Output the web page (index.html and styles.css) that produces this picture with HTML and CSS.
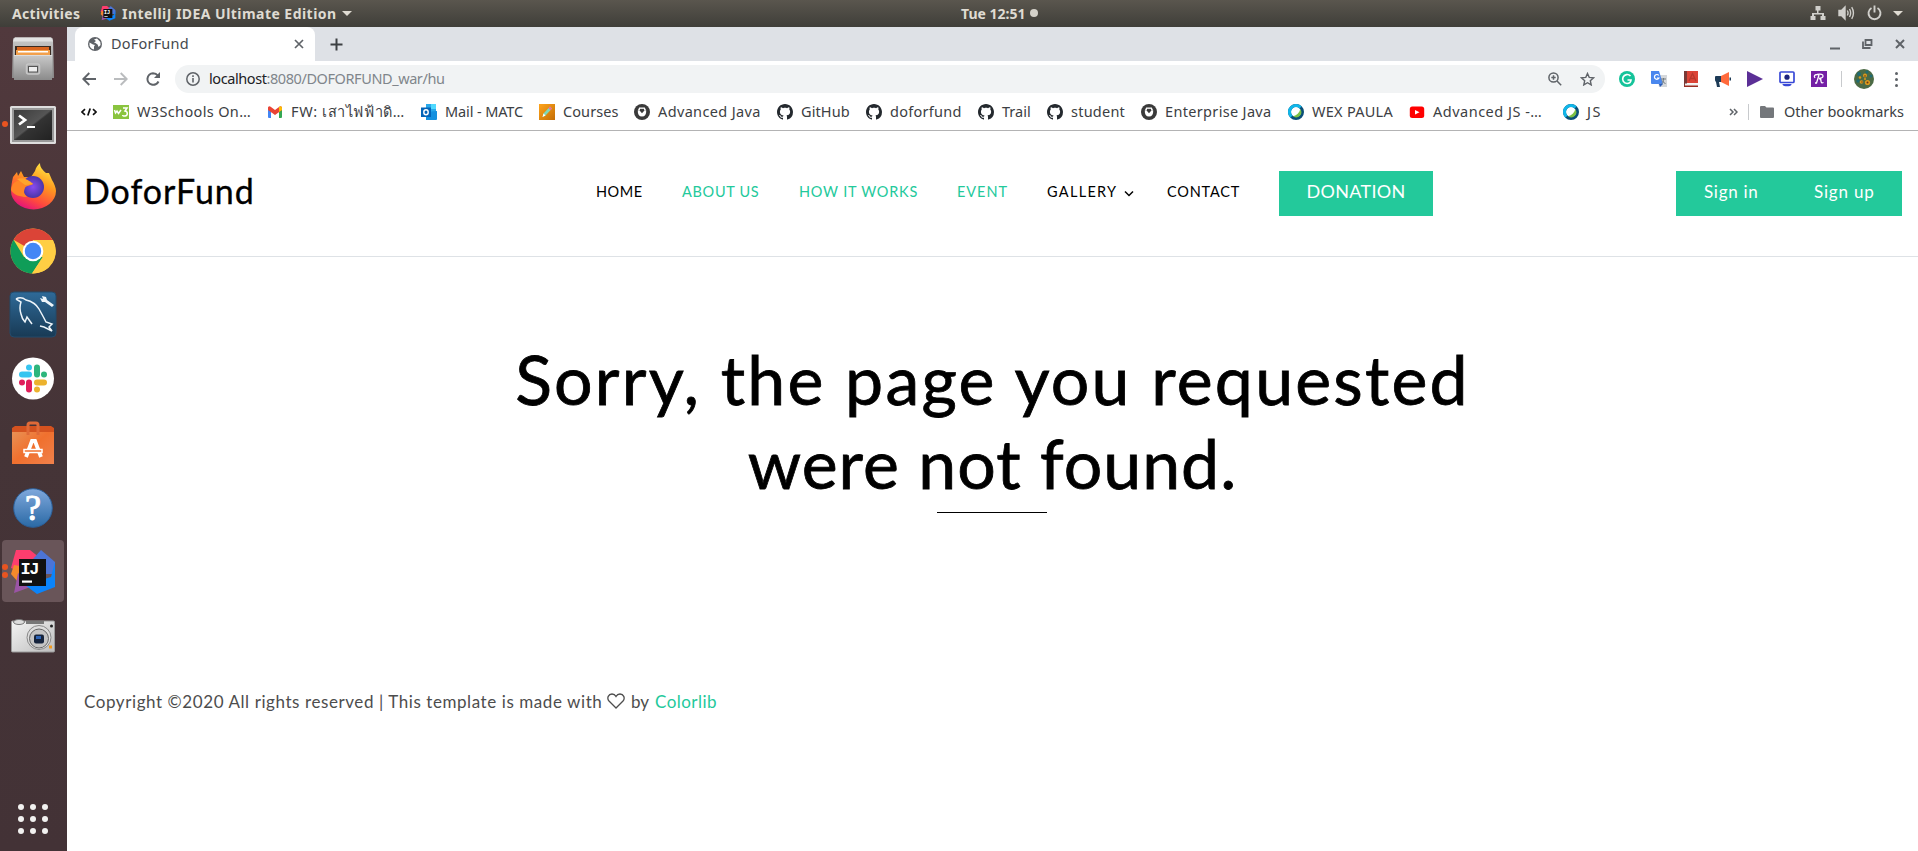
FILE: index.html
```html
<!DOCTYPE html>
<html lang="en">
<head>
<meta charset="utf-8">
<title>DoForFund</title>
<link rel="stylesheet" href="styles.css">
</head>
<body>
<svg class="defs" width="0" height="0" aria-hidden="true">
  <defs>
    <linearGradient id="grey" x1="0" y1="0" x2="0" y2="1"><stop offset="0" stop-color="#c9c9c9"/><stop offset="1" stop-color="#8b8b8b"/></linearGradient>
    <linearGradient id="term" x1="0" y1="0" x2="1" y2="1"><stop offset="0" stop-color="#3b3b3b"/><stop offset=".48" stop-color="#555"/><stop offset=".52" stop-color="#333"/><stop offset="1" stop-color="#222"/></linearGradient>
    <linearGradient id="fox" x1=".8" y1="0" x2=".3" y2="1"><stop offset="0" stop-color="#fff04a"/><stop offset=".4" stop-color="#ff9a1f"/><stop offset=".75" stop-color="#ff4a3d"/><stop offset="1" stop-color="#e3107e"/></linearGradient>
    <radialGradient id="globe"><stop offset="0" stop-color="#8a4bf0"/><stop offset="1" stop-color="#4a36a8"/></radialGradient>
    <linearGradient id="sea" x1="0" y1="0" x2="0" y2="1"><stop offset="0" stop-color="#2f6a98"/><stop offset="1" stop-color="#183a55"/></linearGradient>
    <linearGradient id="bag" x1="0" y1="0" x2="1" y2="1"><stop offset="0" stop-color="#e8965a"/><stop offset=".5" stop-color="#f0702e"/><stop offset="1" stop-color="#f0814c"/></linearGradient>
    <linearGradient id="help" x1="0" y1="0" x2="0" y2="1"><stop offset="0" stop-color="#7fa8dc"/><stop offset="1" stop-color="#2a69a5"/></linearGradient>
    <linearGradient id="cam" x1="0" y1="0" x2="1" y2="1"><stop offset="0" stop-color="#f4f4f4"/><stop offset="1" stop-color="#bdbdbd"/></linearGradient>
    <linearGradient id="pen" x1="0" y1="0" x2="1" y2="1"><stop offset="0" stop-color="#ffa41b"/><stop offset="1" stop-color="#c46e05"/></linearGradient>
    <symbol id="ij" viewBox="0 0 48 48">
      <path d="M7 3l14 0 10 8-4 20-25-10z" fill="#fe3d6e"/>
      <path d="M5 18l-3 9 7 8 8-4-6-12z" fill="#f58a2b"/>
      <path d="M9 26L5 46l22-8z" fill="#9a54a5"/>
      <path d="M24 12l8-9 14 12v12H24z" fill="#4c74d6"/>
      <path d="M46 15v25L28 47 16 38l26-8z" fill="#0b84fb"/>
      <path d="M10 12h27v27H10z" fill="#111"/>
      <text x="11.500" y="27" class="ij-text">IJ</text>
      <path d="M13 33.500h10v2.200H13z" fill="#fff"/>
    </symbol>
    <symbol id="github" viewBox="0 0 16 16"><path fill="#24292e" d="M8 0C3.580 0 0 3.580 0 8c0 3.540 2.290 6.530 5.470 7.590.4.070.55-.17.55-.38 0-.19-.01-.82-.01-1.490-2.010.37-2.530-.49-2.690-.94-.09-.23-.48-.94-.82-1.130-.28-.15-.68-.52-.01-.53.63-.01 1.080.58 1.230.82.72 1.210 1.870.87 2.330.66.070-.52.28-.87.51-1.070-1.780-.2-3.640-.89-3.640-3.950 0-.87.31-1.590.82-2.150-.08-.2-.36-1.020.080-2.120 0 0 .67-.21 2.200.82.64-.18 1.320-.27 2-.27s1.360.090 2 .27c1.530-1.040 2.200-.82 2.200-.82.44 1.100.16 1.920.080 2.120.51.56.82 1.270.82 2.150 0 3.070-1.870 3.750-3.650 3.950.29.25.54.73.54 1.480 0 1.070-.01 1.930-.01 2.200 0 .21.15.46.55.38A8.010 8.010 0 0016 8c0-4.420-3.580-8-8-8z"/></symbol>
    <symbol id="cup" viewBox="0 0 16 16"><circle cx="8" cy="8" r="8" fill="#3a3a3a"/><path d="M3.800 6.500h8.400q.3 6-4.200 6t-4.200-6z" fill="#fff"/><path d="M5.200 3.500h5.600l1.400 3H3.800z" fill="#fff"/><path d="M8 9.300L5.800 6.700q-.3-2 1.200-2.200L8 5.300l1-.8q1.500.2 1.200 2.200z" fill="#3a3a3a"/></symbol>
    <symbol id="webex" viewBox="0 0 16 16"><circle cx="8" cy="8" r="6.500" fill="none" stroke="#0a4f78" stroke-width="3"/><path d="M3.400 12.600A6.500 6.500 0 0112.600 3.400" fill="none" stroke="#10b7ea" stroke-width="3"/><path d="M12.300 5.300a5 5 0 01-7 7c3.500-.8 6-3.300 7-7z" fill="#7bc043"/></symbol>
  </defs>
</svg>

<header class="panel">
  <div class="panel-left">
    <span class="activities">Activities</span>
    <svg class="i16" viewBox="0 0 48 48"><use href="#ij"/></svg>
    <span class="appname">IntelliJ IDEA Ultimate Edition</span>
    <i class="caret"></i>
  </div>
  <div class="clock"><span>Tue 12:51</span><i class="dot"></i></div>
  <div class="panel-right">
    <svg width="16" height="16" viewBox="0 0 16 16" fill="#d0cfcb"><path d="M5.500 1h5v4.500h-2V8H14v3h1.500v4h-5v-4H12V9.500H4V11h1.500v4h-5v-4H2V8h5V5.500H5.500z"/></svg>
    <svg width="17" height="16" viewBox="0 0 17 16" fill="none" stroke="#d0cfcb" stroke-width="1.400"><path d="M1 5.500h2.500L7 2v12l-3.500-3.500H1z" fill="#d0cfcb"/><path d="M9.300 5.500q1.500 2.500 0 5M11.500 4q2.300 4 0 8M13.700 2.200q3.500 5.800 0 11.600"/></svg>
    <svg width="15" height="16" viewBox="0 0 15 16" fill="none" stroke="#d0cfcb" stroke-width="1.900"><path d="M4.500 3a6 6 0 106 0M7.500 .5v7"/></svg>
    <i class="caret"></i>
  </div>
</header>

<div class="desktop">
  <nav class="dock">
    <div class="app"><svg viewBox="0 0 48 48"><path d="M4 6q0-2.500 2-2.500h36q2 0 2 2.500l1 38H3z" fill="url(#grey)"/><path d="M6 3.500h36l2 4H4z" fill="#e2e2e2"/><path d="M6 12h36v10H6z" fill="#3a2a20"/><path d="M8 13h32v8H8z" fill="#d9651f"/><path d="M7 16h34v6H7z" fill="#f2a04c"/><path d="M9 17h30v1.500H9z" fill="#fff"/><path d="M5 21h38v25H5z" fill="url(#grey)"/><path d="M5 21h38v1H5z" fill="#ddd"/><rect x="17.500" y="30" width="13" height="10" rx="2" fill="#aaa" stroke="#c6c6c6" stroke-width="1.500"/><rect x="19.500" y="32.500" width="9" height="5.500" fill="#eee" stroke="#555"/></svg></div>
    <div class="app running"><svg viewBox="0 0 48 48"><rect x="1" y="8" width="46" height="38" rx="1.500" fill="#dedede"/><rect x="3" y="10" width="42" height="34" fill="#999"/><rect x="5" y="12" width="38" height="30" fill="url(#term)"/><path d="M10 17.500l6 4.500-6 4.500" fill="none" stroke="#fff" stroke-width="2.800"/><path d="M18 28h8v2h-8z" fill="#fff"/></svg></div>
    <div class="app"><svg viewBox="0 0 48 48"><path d="M4 15l4-5 1 4 3-5 3 6 7 0 4-6c1-4 3-6 5-8 0 5 3 7 6 10l3 0 3 7c2 3 4 8 4 11a22.500 18.500 0 01-45 0c0-5 1-9 2-14z" fill="url(#fox)"/><circle cx="24" cy="25" r="11" fill="url(#globe)"/><path d="M2 28c1-8 6-10 11-9 4 1 10 1 11 3-2 2-7 1-8 4-1 3-2 5 2 9-7 0-13-2-16-7z" fill="#ff8526"/><path d="M8 17q8-3 16 5-5 1-8 1z" fill="#ffa52c"/></svg></div>
    <div class="app"><svg viewBox="0 0 48 48"><circle cx="24" cy="25" r="22.500" fill="#ffce44"/><path d="M4.500 13.700A22.500 22.500 0 0143.500 13.700V14H24v11z" fill="#db4437"/><path d="M4.500 13.700A22.500 22.500 0 0023 47.500L34 31H15z" fill="#0f9d58"/><path d="M24 14h20a22.500 22.500 0 01-21 33.500l11-17z" fill="#ffce44"/><circle cx="24" cy="25" r="10.300" fill="#fff"/><circle cx="24" cy="25" r="8.200" fill="#4387f5"/></svg></div>
    <div class="app"><svg viewBox="0 0 48 48"><rect x="1" y="2" width="46" height="45" rx="4" fill="url(#sea)" stroke="#234a6b"/><g fill="none" stroke="#eef5fa" stroke-width="1.500"><path d="M7 9q5-3 10 1 9 2 13 9 5 9 7 13l6 2-3 3 3 4-8-4-4-1"/><path d="M7 9l5 3q-2 6 0 12 1 5 4 8l2-5 5 7"/></g><path d="M33 6l4 1 1 3 7 5-2 2-7-5-3 0-2-4 3 1z" fill="#eef5fa"/></svg></div>
    <div class="app"><svg viewBox="0 0 48 48"><circle cx="24" cy="24.500" r="21" fill="#fff"/><g stroke-width="6" stroke-linecap="round"><path d="M13 20.500h7" stroke="#36c5f0"/><path d="M20 13.500v0" stroke="#36c5f0"/><path d="M28 13.500v7" stroke="#2eb67d"/><path d="M35 20.500v0" stroke="#2eb67d"/><path d="M28 28.500h7" stroke="#ecb22e"/><path d="M28 35.500v0" stroke="#ecb22e"/><path d="M20 28.500v7" stroke="#e01e5a"/><path d="M13 28.500v0" stroke="#e01e5a"/></g></svg></div>
    <div class="app"><svg viewBox="0 0 48 48"><path d="M3 9h42v36H3z" fill="url(#bag)"/><path d="M3 9l3-2h36l3 2v4H3z" fill="#d4521f"/><path d="M19 16V6q0-2 2-2h6q2 0 2 2v10" fill="none" stroke="#df6a38" stroke-width="3"/><path d="M17 38l6-16h3l6 16" fill="none" stroke="#fff" stroke-width="3.800"/><path d="M15 30.500h18v3H15z" fill="#f0702e" stroke="#fff" stroke-width="1.500"/></svg></div>
    <div class="app"><svg viewBox="0 0 48 48"><circle cx="24" cy="25" r="19.300" fill="url(#help)" stroke="#2b5f99"/><text x="24" y="37" class="help-text">?</text></svg></div>
    <div class="app running two active"><svg viewBox="0 0 48 48"><use href="#ij"/></svg></div>
    <div class="app"><svg viewBox="0 0 48 48"><rect x="2.500" y="10" width="43" height="31" rx="1" fill="url(#cam)" stroke="#9a9a9a"/><path d="M17 10h18v3H17z" fill="#777"/><ellipse cx="10" cy="11" rx="5.500" ry="2.500" fill="#ddd" stroke="#777"/><circle cx="30" cy="26.500" r="12" fill="#ddd" stroke="#888"/><circle cx="30" cy="27.500" r="9.500" fill="#c4c4c4" stroke="#666"/><rect x="25" y="23.500" width="10" height="9" rx="2" fill="#15233c"/><path d="M27 25h5v3h-5z" fill="#2d63b5"/><circle cx="42.500" cy="15" r="1.500" fill="#222"/><path d="M40 34.500h3v3h-3z" fill="#f39a1e"/></svg></div>
    <div class="grid"><i></i><i></i><i></i><i></i><i></i><i></i><i></i><i></i><i></i></div>
  </nav>

  <main class="browser">
    <div class="tabs">
      <div class="tab">
        <svg width="14" height="14" viewBox="0 0 14 14"><circle cx="7" cy="7" r="7" fill="#5f6368"/><path d="M1.500 5.500L5 7.500l2 .5-1 1.500v3Q2.500 12 1.500 8.500zM6 2.500l3-1 3.300 3.500.3 3-2 2-1-2.500L7.500 6 6 5.500l2-1.500z" fill="#fff"/></svg>
        <span class="tab-title">DoForFund</span>
        <svg width="10" height="10" viewBox="0 0 10 10" stroke="#5f6368" stroke-width="1.700"><path d="M1 1l8 8M9 1L1 9"/></svg>
      </div>
      <svg class="plus" width="13" height="13" viewBox="0 0 13 13" stroke="#3c4043" stroke-width="2"><path d="M6.500 .5v12M.5 6.500h12"/></svg>
      <div class="winctl">
        <svg width="10" height="12" viewBox="0 0 10 12"><path d="M0 9.500h10v2H0z" fill="#5f6368"/></svg>
        <svg width="11" height="10" viewBox="0 0 11 10" fill="none" stroke="#5f6368" stroke-width="1.800"><path d="M3.500 1h6v5h-6zM1 2.500V9h7.500"/></svg>
        <svg width="10" height="10" viewBox="0 0 10 10" stroke="#5f6368" stroke-width="2"><path d="M1 1l8 8M9 1L1 9"/></svg>
      </div>
    </div>

    <div class="toolbar">
      <svg width="14" height="14" viewBox="0 0 14 14" fill="none" stroke="#5f6368" stroke-width="1.900"><path d="M14 7H1.500M7.300 1L1.300 7l6 6"/></svg>
      <svg width="14" height="14" viewBox="0 0 14 14" fill="none" stroke="#babcbe" stroke-width="1.900"><path d="M0 7h12.500M6.700 1l6 6-6 6"/></svg>
      <svg width="15" height="14" viewBox="0 0 15 14"><path d="M12.500 9.500A5.800 5.800 0 117 1.200c2 0 3.700.8 4.800 2.300" fill="none" stroke="#5f6368" stroke-width="2"/><path d="M14 0v6H8z" fill="#5f6368"/></svg>
      <div class="omnibox">
        <svg width="14" height="14" viewBox="0 0 14 14"><circle cx="7" cy="7" r="6.200" fill="none" stroke="#5f6368" stroke-width="1.500"/><path d="M6.200 6h1.600v4.500H6.200zM6.200 3.300h1.600v1.600H6.200z" fill="#5f6368"/></svg>
        <span class="url"><b>localhost</b>:8080/DOFORFUND_war/hu</span>
        <svg width="14" height="14" viewBox="0 0 14 14" fill="none" stroke="#5f6368" stroke-width="1.500"><circle cx="5.500" cy="5.500" r="4.600"/><path d="M9 9l4.200 4.200M3.300 5.500h4.400M5.500 3.300v4.400"/></svg>
        <svg class="star" width="15" height="14" viewBox="0 0 15 14" fill="none" stroke="#5f6368" stroke-width="1.400"><path d="M7.500 1.500l1.700 3.900 4.300.4-3.200 2.900.9 4.200-3.700-2.200-3.700 2.200.9-4.200L1.500 5.800l4.300-.4z"/></svg>
      </div>
      <div class="ext">
        <svg viewBox="0 0 16 16"><circle cx="8" cy="8" r="8" fill="#15c39a"/><path d="M11.500 5A4.500 4.500 0 108 12.500c2.200 0 3.800-1.500 4-3.500H8.500" fill="none" stroke="#fff" stroke-width="1.700"/></svg>
        <svg viewBox="0 0 16 16"><path d="M6 4h10v12H8z" fill="#d5d8db"/><path d="M0 0h8l4 13H1q-1 0-1-1z" fill="#4a87ee"/><path d="M7.800 4.500A2.400 2.400 0 108 7H6" fill="none" stroke="#fff" stroke-width="1.200"/><path d="M8 13h4l-3 3z" fill="#2c5db8"/><path d="M10 8h5M12.500 7v1q0 4-2 5M11 9.500l3.500 3.500" stroke="#70797f" fill="none"/></svg>
        <svg viewBox="0 0 16 16"><path d="M1 0h14v12H1z" fill="#db4437"/><path d="M1 0h3v15H1z" fill="#7a3a36"/><path d="M2 12.500h13v2.500H2z" fill="#eee"/><path d="M1 14.500h14V16H1z" fill="#9b2d22"/><path d="M6 10L9.500 2.500 13 10M7 7.500h5" stroke="#b8382d" stroke-width="1.300" fill="none"/></svg>
        <svg viewBox="0 0 16 16"><path d="M0 6q0-1 1-1h5v6H4l1 5H2L1 11q-1-1-1-2z" fill="#1d3b57"/><path d="M6 5l8-4v14l-8-4z" fill="#ff6a3c"/><path d="M14.500 6.500h1.500v3h-1.500z" fill="#1d3b57"/></svg>
        <svg viewBox="0 0 16 16"><path d="M0 0L16 8 0 16z" fill="#5b2f96"/></svg>
        <svg viewBox="0 0 16 16"><rect x="1" y="1" width="14" height="10.500" rx="1" fill="#fff" stroke="#3949d6" stroke-width="1.700"/><circle cx="8" cy="6.200" r="2.600" fill="#1b237e"/><path d="M3.500 13h9q0 2-3 2.300h-3Q3.500 15 3.500 13z" fill="#3949d6"/></svg>
        <svg viewBox="0 0 16 16"><path d="M0 0h16v16H0z" fill="#7420a5"/><path d="M4 7q-2-3 2-3.500 6-1 6 1.500 0 2-4 2.500 2 0 2 2.500t2.500 1.500M8 4L5.500 12H4" fill="none" stroke="#fff" stroke-width="1.300"/></svg>
      </div>
      <i class="sep"></i>
      <svg class="avatar" width="20" height="20" viewBox="0 0 20 20"><circle cx="10" cy="10" r="10" fill="#4b6a45"/><g fill="#1f6b72"><circle cx="5" cy="5" r="2"/><circle cx="13" cy="3" r="1.500"/><circle cx="4" cy="12" r="1.700"/><circle cx="17" cy="7" r="1.500"/></g><g fill="#d99a1e"><circle cx="11" cy="6.500" r="2"/><circle cx="7.500" cy="13" r="1.800"/><circle cx="13.500" cy="13.500" r="2.600"/><circle cx="6" cy="8.500" r="1.200"/><circle cx="11" cy="10" r="1"/></g><g fill="#6b3512"><circle cx="11" cy="7" r=".8"/><circle cx="8" cy="13" r=".7"/><circle cx="13.500" cy="13.500" r="1"/></g></svg>
      <div class="kebab"><i></i><i></i><i></i></div>
    </div>

    <div class="bookmarks">
      <svg class="i16" viewBox="0 0 16 16" fill="none" stroke="#111" stroke-width="1.700"><path d="M4 5.200L1 8l3 2.800M12 5.200L15 8l-3 2.800M9.200 4.500l-2.400 7"/></svg>
      <a class="bm w3"><svg viewBox="0 0 16 16"><path d="M0 1h16v14H0z" fill="#8ac43f"/><path d="M1.500 6l1 3 1.500-2 1.500 2.500L8 6M10 4h4l-2 3q2.300.3 2.300 2.500T12 12t-2.300-1" stroke="#fff" stroke-width="1.500" fill="none"/></svg><span>W3Schools On…</span></a>
      <a class="bm fw"><svg viewBox="0 0 16 16"><path d="M1 3.500h3V14H2q-1 0-1-1z" fill="#4285f4"/><path d="M12 3.500h3V13q0 1-1 1h-2z" fill="#34a853"/><path d="M1 3.500Q2 1.500 4 3l4 3 4-3q2-1.500 3 .5V6l-7 5-7-5z" fill="#ea4335"/><path d="M12 3q2-1.500 3 .5V6l-3 2z" fill="#fbbc04"/></svg><span>FW: เสาไฟฟ้าดิ…</span></a>
      <a class="bm mail"><svg viewBox="0 0 16 16"><path d="M5 0h10v8H5z" fill="#28a8ea"/><path d="M10 0h5v5h-5z" fill="#50d9ff"/><path d="M5 8l11-1v8q0 1-1 1H5z" fill="#1490df"/><path d="M0 3.500h10v9.500H0z" fill="#0364b8"/><ellipse cx="5" cy="8.200" rx="2.200" ry="2.500" fill="none" stroke="#fff" stroke-width="1.400"/></svg><span>Mail - MATC</span></a>
      <a class="bm courses"><svg viewBox="0 0 16 16"><path d="M0 0h16v16H0z" fill="url(#pen)"/><path d="M3.500 13l1-3.500 6.500-7 2 2-6.500 7z" fill="#7fd9b9"/><path d="M9.500 4.300l1.500-1.800 2 2-1.600 1.800z" fill="#ef6d93"/><path d="M3.500 13l1-3.500 2 2z" fill="#fff"/></svg><span>Courses</span></a>
      <a class="bm advjava"><svg><use href="#cup"/></svg><span>Advanced Java</span></a>
      <a class="bm gh"><svg><use href="#github"/></svg><span>GitHub</span></a>
      <a class="bm dff"><svg><use href="#github"/></svg><span>doforfund</span></a>
      <a class="bm trail"><svg><use href="#github"/></svg><span>Trail</span></a>
      <a class="bm student"><svg><use href="#github"/></svg><span>student</span></a>
      <a class="bm ent"><svg><use href="#cup"/></svg><span>Enterprise Java</span></a>
      <a class="bm wex"><svg><use href="#webex"/></svg><span>WEX PAULA</span></a>
      <a class="bm advjs"><svg viewBox="0 0 16 16"><rect x=".8" y="2.500" width="14.400" height="11.500" rx="2.500" fill="#f00"/><path d="M6 6l4.500 2.200L6 10.500z" fill="#fff"/></svg><span>Advanced JS -…</span></a>
      <a class="bm js"><svg><use href="#webex"/></svg><span>JS</span></a>
      <div class="bm-right">
        <svg width="9" height="8" viewBox="0 0 9 8" fill="none" stroke="#5f6368" stroke-width="1.500"><path d="M1 1l3 3-3 3M5 1l3 3-3 3"/></svg>
        <i class="sep"></i>
        <svg width="14" height="12" viewBox="0 0 14 12"><path d="M0 1q0-1 1-1h4l1.500 1.500H13q1 0 1 1V11q0 1-1 1H1q-1 0-1-1z" fill="#74777b"/></svg>
        <span class="other">Other bookmarks</span>
      </div>
    </div>

    <div class="site">
      <header class="site-head">
        <a class="brand">DoforFund</a>
        <nav class="menu">
          <a class="home">HOME</a>
          <a class="about green">ABOUT US</a>
          <a class="how green">HOW IT WORKS</a>
          <a class="event green">EVENT</a>
          <a class="gallery"><span>GALLERY</span><svg width="10" height="7" viewBox="0 0 10 7" fill="none" stroke="#000" stroke-width="1.500"><path d="M1 1.500l4 4 4-4"/></svg></a>
          <a class="contact">CONTACT</a>
          <a class="donation">DONATION</a>
        </nav>
        <div class="auth"><a class="signin">Sign in</a><a class="signup">Sign up</a></div>
      </header>
      <section class="hero">
        <h1><span class="l1">Sorry, the page you requested</span><span class="l2">were not found.</span></h1>
        <i class="rule"></i>
      </section>
      <footer class="foot">
        <span class="copy">Copyright ©2020 All rights reserved | This template is made with</span>
        <svg width="18" height="16" viewBox="0 0 18 16" fill="none" stroke="#4d4d4d" stroke-width="1.300"><path d="M9 15L2 8C-.5 5 1.500 1 5 1c2 0 3.300 1.200 4 2.500C9.700 2.200 11 1 13 1c3.500 0 5.500 4 3 7z"/></svg>
        <span class="by">by</span>
        <a class="colorlib">Colorlib</a>
      </footer>
    </div>
  </main>
</div>
</body>
</html>
```
FILE: styles.css
```css
* { box-sizing: border-box; }
body { margin: 0; width: 1918px; height: 851px; overflow: hidden; display: flex; flex-direction: column; background: #fff; font: 14.5px "Noto Sans", sans-serif; white-space: nowrap; }
svg { display: block; flex: none; }
.defs { position: absolute; }
i { display: block; flex: none; }
.i16 { width: 16px; height: 16px; }

/* Top panel */
.panel { flex: none; height: 27px; display: grid; grid-template-columns: 961px auto 1fr; align-items: center; background: linear-gradient(#5a564e, #3f3e39); color: #dfdbd2; font-size: 14px; font-weight: 700; line-height: 25px; padding-bottom: 1px; }
.panel-left { display: flex; align-items: center; padding-left: 12px; }
.activities { width: 88px; letter-spacing: .33px; }
.appname { width: 220px; margin-left: 6px; letter-spacing: .46px; }
.caret { border: 5px solid transparent; border-top-color: #dfdbd2; border-bottom: 0; }
.clock { display: flex; align-items: center; gap: 5px; }
.dot { width: 8px; height: 8px; border-radius: 50%; background: #d5d2ca; }
.panel-right { display: flex; align-items: center; justify-content: flex-end; gap: 12px; padding-right: 15px; }
.panel-right .caret { margin-left: -1px; }

/* Dock */
.desktop { flex: 1; display: flex; min-height: 0; }
.dock { flex: none; width: 67px; display: flex; flex-direction: column; background: linear-gradient(#51393d, #453437 50%, #43323a00), #433236; }
.app { position: relative; flex: none; height: 64.2px; display: flex; align-items: center; justify-content: center; padding-right: 1px; }
.app:first-child { margin-top: -1.600px; }
.app svg { position: relative; width: 48px; height: 48px; }
.app.active::before { content: ""; position: absolute; left: 2px; top: 1px; width: 62px; height: 62px; border-radius: 4px; background: #695559; }
.running::after { content: ""; position: absolute; left: 2px; top: 31px; width: 6px; height: 6px; border-radius: 50%; background: #e95420; }
.two::after { top: 25px; box-shadow: 0 8px #e95420; }
.grid { margin: auto 0 17px 18px; display: grid; grid-template-columns: repeat(3, 6px); gap: 6px; }
.grid i { width: 6px; height: 6px; border-radius: 50%; background: #f2f1f0; }
.ij-text { font: 700 17px "Liberation Mono", monospace; letter-spacing: -1.500px; fill: #fff; }
.help-text { font: 36px "Liberation Serif", serif; fill: #fff; stroke: #fff; text-anchor: middle; }

/* Browser chrome */
.browser { flex: 1; display: flex; flex-direction: column; min-width: 0; }
.tabs { flex: none; height: 34px; display: flex; align-items: center; background: #dee1e6; }
.tab { width: 240px; height: 34px; margin-left: 8px; display: flex; align-items: center; padding: 0 11px 0 13px; background: #fff; border-radius: 8px 8px 0 0; color: #45494d; }
.tab-title { flex: 1; margin: -2px 0 0 9px; letter-spacing: .2px; }
.plus { margin-left: 15px; }
.winctl { margin-left: auto; display: flex; align-items: center; gap: 22px; padding-right: 13px; }
.toolbar { flex: none; height: 36px; display: flex; align-items: center; padding: 0 14px 0 15px; }
.toolbar > svg { margin-right: 18px; }
.toolbar > svg:nth-child(3) { margin-right: 14px; }
.omnibox { width: 1430px; height: 28px; border-radius: 14px; background: #f1f3f4; display: flex; align-items: center; padding: 0 10px 0 11px; color: #80868b; }
.url { flex: 1; margin: -2px 0 0 9px; letter-spacing: -.42px; }
.url b { font-weight: 400; color: #202124; }
.star { margin-left: 18px; }
.ext { display: flex; gap: 16px; margin-left: 14px; }
.ext svg { width: 16px; height: 16px; }
.sep { width: 1px; height: 16px; background: #c8cacd; }
.ext + .sep { margin-left: 14px; }
.toolbar > .avatar { margin: 0 0 0 12px; }
.kebab { display: grid; gap: 3px; margin-left: auto; margin-right: 6px; }
.kebab i { width: 3px; height: 3px; border-radius: 50%; background: #5f6368; }
.bookmarks { flex: none; height: 34px; display: flex; align-items: center; gap: 16px; padding: 0 14px 4px; border-bottom: 1px solid #b3b3b4; color: #3c4043; line-height: 26px; }
.bm { flex: none; display: flex; align-items: center; gap: 8px; }
.bm span, .other { margin-top: -2px; }
.bm svg { width: 16px; height: 16px; }
.w3 { width: 138px; letter-spacing: .35px; }
.fw { width: 138px; letter-spacing: .6px; }
.mail { width: 102px; letter-spacing: -.12px; }
.courses { width: 79px; letter-spacing: .08px; }
.advjava { width: 127px; letter-spacing: .36px; }
.gh { width: 73px; letter-spacing: .1px; }
.dff { width: 96px; letter-spacing: .27px; }
.trail { width: 53px; }
.student { width: 78px; letter-spacing: .23px; }
.ent { width: 131px; letter-spacing: .33px; }
.wex { width: 105px; letter-spacing: .27px; }
.advjs { width: 138px; letter-spacing: .5px; }
.js { letter-spacing: 1.500px; }
.bm-right { margin-left: auto; display: flex; align-items: center; }
.bm-right .sep { margin: 0 11px 0 10px; }
.other { margin-left: 10px; width: 120px; }

/* Site */
.site { flex: 1; font-family: Lato, sans-serif; color: #000; }
.site-head { height: 126px; display: flex; align-items: flex-start; padding: 40px 16px 0 17px; border-bottom: 1px solid #dee2e6; }
.brand { width: 512px; margin-top: -2px; font-size: 34px; line-height: 44px; letter-spacing: .95px; -webkit-text-stroke: .3px; }
.menu { display: flex; align-items: flex-start; font-size: 14.5px; line-height: 42px; }
.menu a { flex: none; }
.menu .green { color: #23c99b; }
.home { width: 86px; letter-spacing: .5px; }
.about { width: 117px; letter-spacing: .7px; }
.how { width: 158px; letter-spacing: .77px; }
.event { width: 90px; letter-spacing: .95px; }
.gallery { width: 120px; display: flex; align-items: center; gap: 7px; letter-spacing: 1.300px; }
.gallery svg { margin-top: 3px; }
.contact { width: 112px; letter-spacing: .8px; }
.donation { width: 154px; height: 45px; background: #23c99b; color: #fff; font-size: 18px; line-height: 41px; text-align: center; letter-spacing: .3px; }
.auth { margin-left: auto; width: 226px; height: 45px; display: flex; background: #23c99b; color: #fff; font-size: 17px; line-height: 41px; }
.signin { width: 138px; padding-left: 28px; letter-spacing: .7px; }
.signup { letter-spacing: .8px; }
.hero { height: 394px; padding-top: 80px; display: flex; flex-direction: column; align-items: center; }
h1 { margin: 0; display: flex; flex-direction: column; align-items: center; font-size: 68px; font-weight: 400; line-height: 84px; -webkit-text-stroke: .8px #000; }
.l1 { letter-spacing: 2.200px; }
.l2 { letter-spacing: 1px; }
.rule { width: 110px; height: 1px; margin: 7px 1px 0 0; background: #000; }
.foot { display: flex; align-items: center; padding: 36px 0 0 17px; color: #4d4d4d; font-size: 17px; line-height: 30px; }
.foot svg { margin-top: -2px; }
.copy { width: 523px; letter-spacing: .58px; }
.by { margin-left: 6px; width: 24px; }
.colorlib { color: #23c99b; letter-spacing: .46px; }
```
